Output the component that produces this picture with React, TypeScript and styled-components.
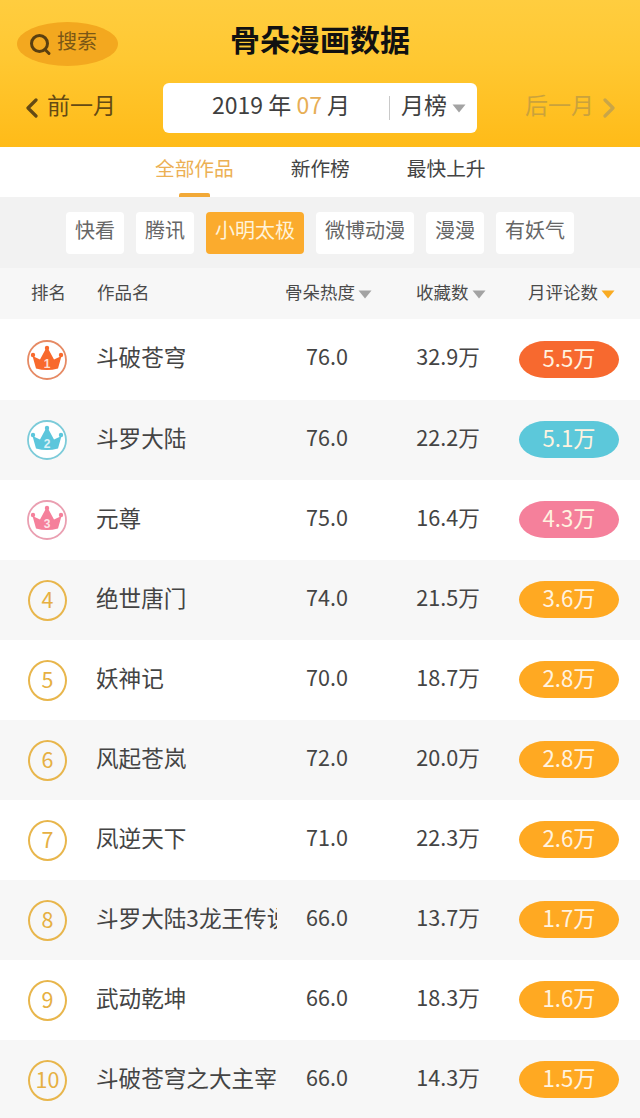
import React from "react";
import styled, { createGlobalStyle } from "styled-components";

const Global = createGlobalStyle`
  html, body { margin: 0; padding: 0; background: #fff; }
  body { font-family: "Noto Sans CJK SC", "Noto Sans", sans-serif; }
`;

const Page = styled.div`
  width: 640px;
  height: 1118px;
  overflow: hidden;
  display: flex;
  flex-direction: column;
  color: #444;
`;

const Header = styled.header`
  height: 147px;
  flex: none;
  box-sizing: border-box;
  padding-top: 22px;
  background: linear-gradient(180deg, #ffcd3f 0%, #ffc832 40%, #ffbb18 100%);
`;

const TopBar = styled.div`
  height: 44px;
  display: grid;
  grid-template-columns: 1fr auto 1fr;
  align-items: center;
`;

const SearchPill = styled.div`
  margin-left: 17px;
  width: 101px;
  height: 44px;
  border-radius: 50%;
  background: #f3a81f;
  display: flex;
  align-items: center;
  box-sizing: border-box;
  padding-left: 12px;
  gap: 5px;
  font-size: 20px;
  color: #7b5716;
  line-height: 1;
`;

const SearchLabel = styled.span`
  position: relative;
  top: -3px;
`;

const Title = styled.h1`
  margin: 0;
  font-size: 30px;
  font-weight: 700;
  line-height: 44px;
  color: #111;
  position: relative;
  top: -6px;
`;

const NavBar = styled.div`
  margin-top: 17px;
  height: 50px;
  display: flex;
  align-items: center;
`;

const MonthLink = styled.div<{ $off?: boolean }>`
  display: flex;
  align-items: center;
  gap: 9px;
  font-size: 23px;
  line-height: 1;
  color: ${(p) => (p.$off ? "#caa23c" : "#644a14")};
  width: ${(p) => (p.$off ? "auto" : "163px")};
  margin-left: ${(p) => (p.$off ? "48px" : "0")};
  padding-left: ${(p) => (p.$off ? "0" : "25px")};
  box-sizing: border-box;
`;

const RaisedText = styled.span`
  position: relative;
  top: -4px;
`;

const DateBox = styled.div`
  width: 314px;
  height: 50px;
  box-sizing: border-box;
  background: #fff;
  border-radius: 6px;
  display: flex;
  align-items: center;
  padding-left: 49px;
  font-size: 23px;
  color: #3f3f3f;
`;

const YearText = styled(RaisedText)`
  width: 178px;
  white-space: pre;
`;

const Month = styled.span`
  color: #e7ae55;
`;

const RankType = styled.span`
  height: 24px;
  border-left: 1px solid #c9c9c9;
  padding-left: 11px;
  display: flex;
  align-items: center;
  gap: 5px;
  margin-left: -1px;
`;

const Tabs = styled.nav`
  height: 50px;
  flex: none;
  background: #fff;
  display: flex;
  padding-left: 155px;
  gap: 57px;
`;

const Tab = styled.div<{ $active?: boolean }>`
  position: relative;
  font-size: 19.7px;
  line-height: 42px;
  color: ${(p) => (p.$active ? "#ecb054" : "#444")};
`;

const TabLine = styled.i`
  position: absolute;
  left: 24px;
  bottom: 0;
  width: 31px;
  height: 4px;
  border-radius: 2px 2px 0 0;
  background: #f2a937;
`;

const Filters = styled.div`
  height: 71px;
  flex: none;
  box-sizing: border-box;
  background: #f2f2f2;
  display: flex;
  padding: 15px 0 0 66px;
  gap: 12px;
`;

const Chip = styled.div<{ $active?: boolean }>`
  height: 42px;
  box-sizing: border-box;
  padding: 0 9px;
  border-radius: 4px;
  font-size: 20px;
  line-height: 35px;
  white-space: nowrap;
  background: ${(p) => (p.$active ? "#fbab2d" : "#fff")};
  color: ${(p) => (p.$active ? "#fff3d9" : "#666")};
`;

const Columns = styled.div`
  display: grid;
  grid-template-columns: 97px 180px 100px 142px 121px;
  align-items: center;
`;

const HeadRow = styled(Columns)`
  height: 51px;
  flex: none;
  box-sizing: border-box;
  padding-bottom: 4px;
  background: #f7f7f7;
  font-size: 17.5px;
  color: #4a4a4a;
`;

const HeadRank = styled.span`
  padding-left: 31px;
`;

const HeadSort = styled.span<{ $left: number }>`
  display: flex;
  align-items: center;
  gap: 3px;
  margin-left: ${(p) => p.$left}px;
  white-space: nowrap;
`;

const SortArrow = styled.span`
  display: flex;
  margin-top: 5px;
`;

const Row = styled(Columns)<{ $alt: boolean; $first: boolean }>`
  height: ${(p) => (p.$first ? "81px" : "80px")};
  flex: none;
  background: ${(p) => (p.$alt ? "#f7f7f7" : "#fff")};
  font-size: 21.6px;
  color: #444;
`;

const RankCell = styled.div`
  padding-left: 28px;
`;

const CrownSlot = styled.div`
  margin-left: -1px;
  height: 40px;
`;

const GoldRing = styled.div`
  width: 39px;
  height: 41px;
  box-sizing: border-box;
  border: 2px solid #e8b64c;
  border-radius: 50%;
  color: #e6b042;
  font-size: 21.5px;
  padding-bottom: 3px;
  display: flex;
  align-items: center;
  justify-content: center;
  line-height: 1;
`;

const Name = styled.div`
  font-size: 22.6px;
  white-space: nowrap;
  overflow: hidden;
  margin-left: -1px;
  position: relative;
  top: -3px;
`;

const Num = styled.div`
  text-align: center;
  position: relative;
  top: -4px;
`;

const Pill = styled.div<{ $color: string }>`
  width: 100px;
  height: 37px;
  margin-bottom: 1px;
  border-radius: 26px / 18.5px;
  background: ${(p) => p.$color};
  color: #fff3e0;
  font-size: 22.2px;
  line-height: 33px;
  text-align: center;
`;

const Triangle = ({ color = "#a3a3a3" }: { color?: string }) => (
  <svg width="14" height="9" viewBox="0 0 14 9">
    <path d="M0.5 0.5h13L7 8.5z" fill={color} />
  </svg>
);

const Chevron = ({ dir, color }: { dir: "l" | "r"; color: string }) => (
  <svg width="13" height="22" viewBox="0 0 13 22">
    <path
      d={dir === "l" ? "M11 3L3 11l8 8" : "M2 3l8 8-8 8"}
      fill="none"
      stroke={color}
      strokeWidth="3.2"
      strokeLinecap="round"
      strokeLinejoin="round"
    />
  </svg>
);

const SearchIcon = () => (
  <svg width="23" height="23" viewBox="0 0 23 23">
    <circle cx="10.5" cy="10.5" r="8" fill="none" stroke="#5a3f10" strokeWidth="3" />
    <path d="M16 16.5l4 4" stroke="#5a3f10" strokeWidth="3" strokeLinecap="round" />
  </svg>
);

const Crown = ({ n, color, ring }: { n: number; color: string; ring: string }) => (
  <svg width="40" height="40" viewBox="0 0 40 40">
    <circle cx="20" cy="20" r="19" fill="#fff" stroke={ring} strokeWidth="1.8" />
    <circle cx="6" cy="15" r="2.2" fill={color} />
    <circle cx="20" cy="8" r="2.2" fill={color} />
    <circle cx="34" cy="15" r="2.2" fill={color} />
    <path
      d="M5.5 16L13 19.5 18.7 9h2.6L27 19.5 34.5 16 31 28.5Q20 31.5 9 28.5z"
      fill={color}
    />
    <text x="20" y="28" textAnchor="middle" fontSize="12" fontWeight="700" fill="#fff" fillOpacity="0.8" fontFamily="Liberation Sans, sans-serif">
      {n}
    </text>
  </svg>
);

const crowns: Record<number, { color: string; ring: string }> = {
  1: { color: "#f8692c", ring: "#e68a64" },
  2: { color: "#5cc6dc", ring: "#7ccbd9" },
  3: { color: "#f5809b", ring: "#ea9fb1" },
};

const rows = [
  ["斗破苍穹", "76.0", "32.9万", "5.5万"],
  ["斗罗大陆", "76.0", "22.2万", "5.1万"],
  ["元尊", "75.0", "16.4万", "4.3万"],
  ["绝世唐门", "74.0", "21.5万", "3.6万"],
  ["妖神记", "70.0", "18.7万", "2.8万"],
  ["风起苍岚", "72.0", "20.0万", "2.8万"],
  ["凤逆天下", "71.0", "22.3万", "2.6万"],
  ["斗罗大陆3龙王传说", "66.0", "13.7万", "1.7万"],
  ["武动乾坤", "66.0", "18.3万", "1.6万"],
  ["斗破苍穹之大主宰", "66.0", "14.3万", "1.5万"],
];

const pillColor = (i: number) =>
  i === 0 ? "#f7692f" : i === 1 ? "#5cc8da" : i === 2 ? "#f5809b" : "#ffa922";

const chips = ["快看", "腾讯", "小明太极", "微博动漫", "漫漫", "有妖气"];

export default function App() {
  return (
    <Page>
      <Global />
      <Header>
        <TopBar>
          <SearchPill>
            <SearchIcon />
            <SearchLabel>搜索</SearchLabel>
          </SearchPill>
          <Title>骨朵漫画数据</Title>
          <span />
        </TopBar>
        <NavBar>
          <MonthLink>
            <Chevron dir="l" color="#644a14" />
            <RaisedText>前一月</RaisedText>
          </MonthLink>
          <DateBox>
            <YearText>
              2019 年 <Month>07</Month> 月
            </YearText>
            <RankType>
              <RaisedText>月榜</RaisedText>
              <Triangle />
            </RankType>
          </DateBox>
          <MonthLink $off>
            <RaisedText>后一月</RaisedText>
            <Chevron dir="r" color="#c9a548" />
          </MonthLink>
        </NavBar>
      </Header>
      <Tabs>
        <Tab $active>
          全部作品
          <TabLine />
        </Tab>
        <Tab>新作榜</Tab>
        <Tab>最快上升</Tab>
      </Tabs>
      <Filters>
        {chips.map((c) => (
          <Chip key={c} $active={c === "小明太极"}>
            {c}
          </Chip>
        ))}
      </Filters>
      <HeadRow>
        <HeadRank>排名</HeadRank>
        <span>作品名</span>
        <HeadSort $left={8}>
          骨朵热度
          <SortArrow>
            <Triangle />
          </SortArrow>
        </HeadSort>
        <HeadSort $left={39}>
          收藏数
          <SortArrow>
            <Triangle />
          </SortArrow>
        </HeadSort>
        <HeadSort $left={9}>
          月评论数
          <SortArrow>
            <Triangle color="#f9ab22" />
          </SortArrow>
        </HeadSort>
      </HeadRow>
      {rows.map((r, i) => (
        <Row key={r[0]} $alt={i % 2 === 1} $first={i === 0}>
          <RankCell>
            {i < 3 ? (
              <CrownSlot>
                <Crown n={i + 1} {...crowns[i + 1]} />
              </CrownSlot>
            ) : (
              <GoldRing>{i + 1}</GoldRing>
            )}
          </RankCell>
          <Name>{r[0]}</Name>
          <Num>{r[1]}</Num>
          <Num>{r[2]}</Num>
          <Pill $color={pillColor(i)}>{r[3]}</Pill>
        </Row>
      ))}
    </Page>
  );
}
